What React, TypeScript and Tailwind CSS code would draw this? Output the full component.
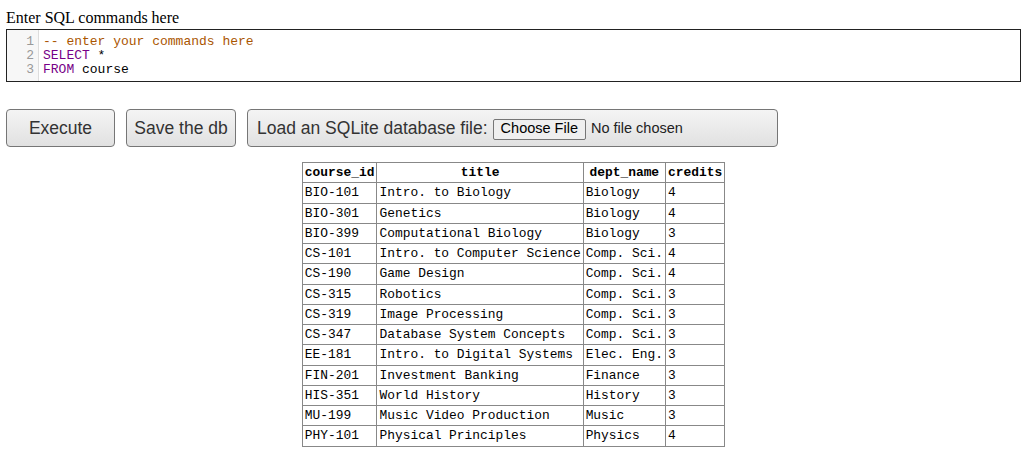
import React from 'react';

const rows: [string, string, string, string][] = [
  ['BIO-101', 'Intro. to Biology', 'Biology', '4'],
  ['BIO-301', 'Genetics', 'Biology', '4'],
  ['BIO-399', 'Computational Biology', 'Biology', '3'],
  ['CS-101', 'Intro. to Computer Science', 'Comp. Sci.', '4'],
  ['CS-190', 'Game Design', 'Comp. Sci.', '4'],
  ['CS-315', 'Robotics', 'Comp. Sci.', '3'],
  ['CS-319', 'Image Processing', 'Comp. Sci.', '3'],
  ['CS-347', 'Database System Concepts', 'Comp. Sci.', '3'],
  ['EE-181', 'Intro. to Digital Systems', 'Elec. Eng.', '3'],
  ['FIN-201', 'Investment Banking', 'Finance', '3'],
  ['HIS-351', 'World History', 'History', '3'],
  ['MU-199', 'Music Video Production', 'Music', '3'],
  ['PHY-101', 'Physical Principles', 'Physics', '4'],
];

const mono = "font-['Liberation_Mono',monospace]";
const btn =
  "h-[38px] rounded-[4px] border border-[#767676] bg-gradient-to-b from-[#f4f4f4] to-[#e1e1e1] text-[17.5px] text-[#333] font-['Liberation_Sans',Arial,sans-serif]";

export default function App() {
  return (
    <div className="min-h-[467px] bg-white px-[6px] pt-[8px] text-black">
      <div className="font-['Liberation_Serif',serif] text-[16px] leading-[19px]">Enter SQL commands here</div>

      {/* editor */}
      <div className={`mt-[2px] flex h-[53px] w-[1015px] border border-[#222] ${mono} text-[13px] leading-[14px]`}>
        <div className="w-[32px] border-r border-[#ddd] bg-[#f7f7f7] pt-[5px] pr-[4px] text-right text-[#999]">
          <div>1</div>
          <div>2</div>
          <div>3</div>
        </div>
        <div className="pt-[5px] pl-[4px]">
          <div className="text-[#a50]">-- enter your commands here</div>
          <div><span className="text-[#708]">SELECT</span> *</div>
          <div><span className="text-[#708]">FROM</span> course</div>
        </div>
      </div>

      {/* buttons */}
      <div className="mt-[27px] flex gap-[11px]">
        <button className={`${btn} w-[109px]`}>Execute</button>
        <button className={`${btn} w-[110px]`}>Save the db</button>
        <div className={`${btn} flex w-[531px] items-center pl-[9px]`}>
          <span>Load an SQLite database file:</span>
          <span className="ml-[5px] mt-[2px] flex h-[21px] items-center rounded-[2px] border border-[#767676] bg-[#efefef] px-[7px] text-[14.5px] text-black">
            Choose File
          </span>
          <span className="ml-[5px] mt-[2px] text-[14.5px] text-[#222]">No file chosen</span>
        </div>
      </div>

      {/* result */}
      <div className="mt-[15px] flex justify-center pr-[4px]">
        <table className={`border-collapse ${mono} text-[12.9px] leading-[15.25px]`}>
          <thead>
            <tr>
              {['course_id', 'title', 'dept_name', 'credits'].map(h => (
                <th key={h} className="border border-[#888] px-[2px] py-[2px] text-center font-bold">{h}</th>
              ))}
            </tr>
          </thead>
          <tbody>
            {rows.map(r => (
              <tr key={r[0]}>
                {r.map((c, i) => (
                  <td key={i} className="border border-[#888] px-[2px] py-[2px] text-left">{c}</td>
                ))}
              </tr>
            ))}
          </tbody>
        </table>
      </div>
    </div>
  );
}
